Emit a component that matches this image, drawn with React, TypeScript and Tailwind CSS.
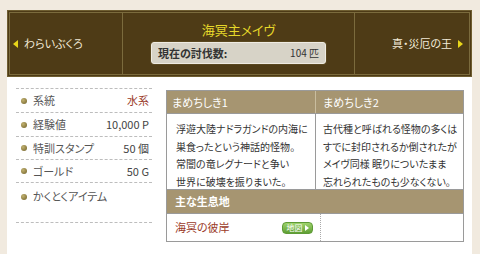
import React from "react";

const font = "font-['Noto_Sans_CJK_JP','Noto_Sans',sans-serif] [font-feature-settings:'palt']";

function Bullet() {
  return (
    <span className="inline-block w-[6px] h-[6px] rounded-full bg-[radial-gradient(circle_at_35%_35%,#c2b270,#6f5f28)] mr-[6px] shrink-0" />
  );
}

const rows: { label: string; value: string; red?: boolean; h: string }[] = [
  { label: "系統", value: "水系", red: true, h: "h-[24px]" },
  { label: "経験値", value: "10,000 P", h: "h-[24px]" },
  { label: "特訓スタンプ", value: "50 個", h: "h-[23px]" },
  { label: "ゴールド", value: "50 G", h: "h-[23px]" },
];

export default function App() {
  return (
    <div className={`w-[480px] h-[254px] bg-[#f1eadf] overflow-hidden pt-[10px] pl-[7px] ${font}`}>
      <div className="w-[465px] h-[244px] bg-white flex flex-col">
        {/* header */}
        <div className="h-[67px] bg-[#4e3b16] border border-[#6f5e31] p-px shrink-0">
          <div className="h-full border border-[#7b6b3d] flex">
            <div className="w-[113px] border-r border-[#7b6b3d] flex items-center pl-[3px]">
              <span className="w-0 h-0 border-y-[4px] border-y-transparent border-r-[5px] border-r-[#e8d51a] mr-[6px]" />
              <span className="text-[11px] text-[#f2ead8] leading-none">わらいぶくろ</span>
            </div>
            <div className="w-[232px] border-r border-[#7b6b3d] flex flex-col items-center pt-[8px]">
              <div className="text-[13px] text-[#e6d82a] leading-[18px]">海冥主メイヴ</div>
              <div className="mt-[3px] w-[175px] h-[22px] bg-[#d7d3c7] border border-[#efebe2] rounded-[3px] flex items-center justify-between px-[6px] shadow-[0_0_0_1px_#5a4820]">
                <span className="text-[11px] font-bold text-[#333] leading-none">現在の討伐数:</span>
                <span className="text-[10px] text-[#333] leading-none">104 匹</span>
              </div>
            </div>
            <div className="flex-1 flex items-center justify-end pr-[6px]">
              <span className="text-[11px] text-[#f2ead8] leading-none">真・災厄の王</span>
              <span className="w-0 h-0 border-y-[4px] border-y-transparent border-l-[5px] border-l-[#e8d51a] ml-[6px]" />
            </div>
          </div>
        </div>
        {/* body */}
        <div className="flex items-start">
          <div className="ml-[9px] w-[136px] mt-[11px] border-b border-dashed border-[#bdbdbd]">
            {rows.map((r) => (
              <div key={r.label} className={`${r.h} border-t border-dashed border-[#bdbdbd] flex items-center pl-[5px] pr-[3px]`}>
                <Bullet />
                <span className="text-[11px] text-[#555] leading-none">{r.label}</span>
                <span className={`ml-auto text-[11px] leading-none ${r.red ? "text-[#9b3a28]" : "text-[#444]"}`}>{r.value}</span>
              </div>
            ))}
            <div className="h-[40px] border-t border-dashed border-[#bdbdbd] flex items-start pt-[8px] pl-[5px]">
              <span className="flex items-center">
                <Bullet />
                <span className="text-[11px] text-[#555] leading-none">かくとくアイテム</span>
              </span>
            </div>
          </div>
          <div className="ml-[14px] mt-[13px] w-[298px] border border-[#9a9a9a]">
            <div className="grid grid-cols-[149px_1fr] bg-[#a69571] h-[22px] text-white text-[11px]">
              <div className="flex items-center pl-[5px] border-r border-[#c9bd9f]">まめちしき1</div>
              <div className="flex items-center pl-[7px]">まめちしき2</div>
            </div>
            <div className="grid grid-cols-[149px_1fr] border-t border-[#9a9a9a] h-[76px] text-[10px] text-[#333] leading-[17.5px]">
              <div className="border-r border-[#9a9a9a] pl-[9px] pt-[6px]">
                <div>浮遊大陸ナドラガンドの内海に</div>
                <div>巣食ったという神話的怪物。</div>
                <div>常闇の竜レグナードと争い</div>
                <div>世界に破壊を振りまいた。</div>
              </div>
              <div className="pl-[7px] pt-[6px]">
                <div>古代種と呼ばれる怪物の多くは</div>
                <div>すでに封印されるか倒されたが</div>
                <div>メイヴ同様 眠りについたまま</div>
                <div>忘れられたものも少なくない。</div>
              </div>
            </div>
            <div className="bg-[#a69571] h-[24px] border-t border-[#9a9a9a] flex items-center pl-[8px] text-white text-[11px] font-bold">主な生息地</div>
            <div className="grid grid-cols-[154px_1fr] h-[28px] border-t border-[#9a9a9a]">
              <div className="border-r border-dotted border-[#aaa] flex items-center pl-[8px] pr-[7px]">
                <span className="text-[11px] text-[#9b3a28] leading-none">海冥の彼岸</span>
                <span className="ml-auto w-[31px] h-[12px] rounded-[4px] bg-[linear-gradient(#9ed36c,#5f9f34)] border border-[#5e9a36] flex items-center justify-center gap-[2px]">
                  <span className="text-[8px] text-white leading-none">地図</span>
                  <span className="w-0 h-0 border-y-[3px] border-y-transparent border-l-[4px] border-l-white" />
                </span>
              </div>
              <div />
            </div>
          </div>
        </div>
      </div>
    </div>
  );
}
